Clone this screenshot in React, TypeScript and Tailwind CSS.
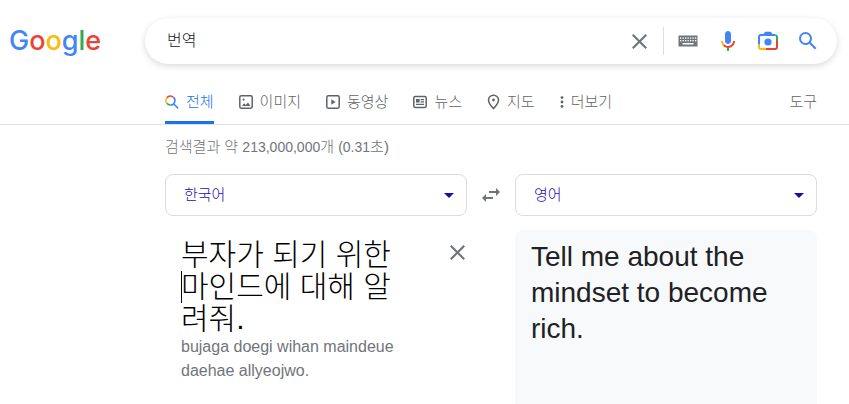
import { useState } from "react";
import type { ReactNode } from "react";

const iconBase = "block shrink-0";

function CloseIcon() {
  return (
    <svg className={iconBase} width="15" height="15" viewBox="5 5 14 14" fill="#70757a">
      <path d="M19 6.41L17.59 5 12 10.59 6.41 5 5 6.41 10.59 12 5 17.59 6.41 19 12 13.41 17.59 19 19 17.59 13.41 12z" />
    </svg>
  );
}

function KeyboardIcon() {
  const cols = [2, 4.5, 7, 9.5, 12, 14.5, 17];
  return (
    <svg className={iconBase} width="20" height="12" viewBox="0 0 20 12">
      <rect x="0.5" y="0.5" width="19" height="11" fill="#70757a" />
      {cols.map((x) => (
        <rect key={x} x={x} y="2.4" width="1.3" height="1.4" fill="#fff" />
      ))}
      {cols.map((x) => (
        <rect key={x} x={x} y="5" width="1.3" height="1.4" fill="#fff" />
      ))}
      <rect x="4.5" y="8" width="11" height="1.5" fill="#fff" />
    </svg>
  );
}

function MicIcon() {
  return (
    <svg className={iconBase} width="24" height="24" viewBox="0 0 24 24">
      <path fill="#4285f4" d="M12 15c1.66 0 3-1.31 3-2.97V5.01C15 3.35 13.66 2 12 2S9 3.34 9 5.01v7.02C9 13.69 10.34 15 12 15z" />
      <path fill="#34a853" d="M11 18.08h2V22h-2z" />
      <path fill="#fbbc04" d="M7.05 16.87C5.78 15.54 5 14.04 5 12h2c0 1.45.56 2.42 1.47 3.38v.32l-1.15 1.18z" />
      <path fill="#ea4335" d="M12 16.93a4.97 5.25 0 0 1-3.54-1.55l-1.41 1.49C8.31 18.21 10.07 19 12 19c3.87 0 6.99-2.92 6.99-7H17c0 2.92-2.24 4.93-5 4.93z" />
    </svg>
  );
}

function LensIcon() {
  return (
    <svg className={iconBase} width="24" height="24" viewBox="0 0 24 24" fill="none" strokeWidth="2">
      <path stroke="#fbbc04" d="M3 15.5V18a2 2 0 0 0 2 2h5" />
      <path stroke="#ea4335" d="M10 20h9a2 2 0 0 0 2-2v-6" />
      <path stroke="#34a853" d="M19.5 6.1A2 2 0 0 1 21 8v4" />
      <path stroke="#4285f4" d="M3 15.5V8a2 2 0 0 1 2-2h14.5" />
      <path fill="#4285f4" d="M7 6l2-3.2h6L17 6z" />
      <circle cx="12" cy="13" r="3.6" fill="#4285f4" />
    </svg>
  );
}

function SearchIcon() {
  return (
    <svg className={iconBase} width="24" height="24" viewBox="0 0 24 24" fill="#4285f4">
      <path d="M20.49 19l-5.73-5.73C15.53 12.2 16 10.91 16 9.5A6.5 6.5 0 1 0 9.5 16c1.41 0 2.7-.47 3.77-1.24L19 20.49 20.49 19zM5 9.5C5 7.01 7.01 5 9.5 5S14 7.01 14 9.5 11.99 14 9.5 14 5 11.99 5 9.5z" />
    </svg>
  );
}

function AllIcon() {
  return (
    <svg className={iconBase} width="14" height="14" viewBox="0 0 14 14" fill="none" strokeWidth="1.5">
      <path stroke="#ea4335" d="M1.9 2.7A4.5 4.5 0 0 1 8.6 2.4" />
      <path stroke="#fbbc04" d="M1.9 8.3A4.5 4.5 0 0 1 1.9 2.7" />
      <path stroke="#34a853" d="M5.3 10.1A4.5 4.5 0 0 1 1.9 8.3" />
      <path stroke="#4285f4" d="M8.6 2.4A4.5 4.5 0 0 1 5.3 10.1M8.6 8.8L13.2 13.4" />
    </svg>
  );
}

function ImageIcon() {
  return (
    <svg className={iconBase} width="14" height="14" viewBox="0 0 14 14" fill="none">
      <rect x="0.8" y="0.8" width="12.4" height="12.4" rx="1.4" stroke="#5f6368" strokeWidth="1.5" />
      <path fill="#5f6368" d="M3 11l2.2-2.8 1.6 1.9L9 7.6 11.4 11z" />
      <circle cx="4.6" cy="4.6" r="1.1" fill="#5f6368" />
    </svg>
  );
}

function VideoIcon() {
  return (
    <svg className={iconBase} width="14" height="14" viewBox="0 0 14 14" fill="none">
      <rect x="0.8" y="0.8" width="12.4" height="12.4" rx="1.4" stroke="#5f6368" strokeWidth="1.5" />
      <path fill="#5f6368" d="M5.3 4.2v5.6L9.6 7z" />
    </svg>
  );
}

function NewsIcon() {
  return (
    <svg className={iconBase} width="14" height="14" viewBox="0 0 14 14" fill="none">
      <rect x="0.8" y="1.6" width="12.4" height="10.8" rx="1.4" stroke="#5f6368" strokeWidth="1.5" />
      <path fill="#5f6368" d="M3 4h3.6v3.4H3zM7.6 4H11v1.2H7.6zM7.6 6.2H11v1.2H7.6zM3 8.8h8V10H3z" />
    </svg>
  );
}

function MapIcon() {
  return (
    <svg className={iconBase} width="13" height="16" viewBox="0 0 13 16" fill="none">
      <path stroke="#5f6368" strokeWidth="1.5" d="M6.5 1.2A4.9 4.9 0 0 0 1.5 6c0 3.4 5 8.6 5 8.6s5-5.2 5-8.6a4.9 4.9 0 0 0-5-4.8z" />
      <circle cx="6.5" cy="6" r="1.4" fill="#5f6368" />
    </svg>
  );
}

function MoreIcon() {
  return (
    <svg className={iconBase} width="4" height="14" viewBox="0 0 4 14" fill="#5f6368">
      <circle cx="2" cy="2.6" r="1.4" />
      <circle cx="2" cy="7" r="1.4" />
      <circle cx="2" cy="11.4" r="1.4" />
    </svg>
  );
}

function SwapIcon() {
  return (
    <svg className={iconBase} width="18" height="14" viewBox="0 0 18 14" fill="#70757a">
      <path d="M0 10l4-4v3h7v2H4v3zM18 4l-4-4v3H7v2h7v3z" />
    </svg>
  );
}

function Tab({ icon, label, active }: { icon: ReactNode; label: string; active?: boolean }) {
  return (
    <a
      href="#"
      className={
        active
          ? "flex items-center gap-[7px] border-b-3 border-[#1a73e8] pt-[3px] text-[#1a73e8]"
          : "flex items-center gap-[7px] border-b-3 border-transparent pt-[3px] text-[#5f6368]"
      }
    >
      {icon}
      {label}
    </a>
  );
}

function LanguageSelect({ label, options }: { label: string; options: string[] }) {
  return (
    <div className="relative flex-1">
      <select
        aria-label={label}
        className="h-[42px] w-full appearance-none rounded-lg border border-[#dadce0] bg-white px-[18px] text-[15px] font-light text-[#1a0dab] outline-none"
      >
        {options.map((o) => (
          <option key={o}>{o}</option>
        ))}
      </select>
      <svg className="pointer-events-none absolute top-[19px] right-[13px]" width="10" height="5" viewBox="0 0 10 5">
        <path fill="#1a0dab" d="M0 0h10L5 5z" />
      </svg>
    </div>
  );
}

export default function App() {
  const [query, setQuery] = useState("번역");
  const [source, setSource] = useState("부자가 되기 위한 마인드에 대해 알려줘.");

  return (
    <div className="flex min-h-screen flex-col bg-white font-['Liberation_Sans','Noto_Sans_CJK_KR',sans-serif] text-[15px] font-light">
      <header className="flex items-center pt-[18px] pr-3 pl-[9px]">
        <a
          href="#"
          aria-label="Google"
          className="w-[136px] shrink-0 font-['Inter',sans-serif] text-[27px] leading-[46px] font-medium"
        >
          <span className="text-[#4285f4]">G</span>
          <span className="text-[#ea4335]">o</span>
          <span className="text-[#fbbc05]">o</span>
          <span className="text-[#4285f4]">g</span>
          <span className="text-[#34a853]">l</span>
          <span className="text-[#ea4335]">e</span>
        </a>
        <form
          className="flex h-[46px] min-w-0 flex-1 items-center rounded-full bg-white pr-[9px] pl-[22px] shadow-[0_2px_6px_rgba(60,64,67,0.2)]"
          onSubmit={(e) => e.preventDefault()}
        >
          <input
            aria-label="검색"
            className="min-w-0 flex-1 text-base text-[#202124] outline-none"
            value={query}
            onChange={(e) => setQuery(e.target.value)}
          />
          <button type="button" aria-label="지우기" className="flex w-12 justify-center" onClick={() => setQuery("")}>
            <CloseIcon />
          </button>
          <span className="mr-1 h-7 w-px bg-[#dadce0]" />
          <button type="button" aria-label="입력 도구" className="flex w-10 justify-center">
            <KeyboardIcon />
          </button>
          <button type="button" aria-label="음성 검색" className="flex w-10 justify-center">
            <MicIcon />
          </button>
          <button type="button" aria-label="이미지로 검색" className="flex w-10 justify-center">
            <LensIcon />
          </button>
          <button type="submit" aria-label="Google 검색" className="flex w-10 justify-center">
            <SearchIcon />
          </button>
        </form>
      </header>

      <nav className="mt-4 flex h-[45px] gap-[25px] border-b border-[#dfe1e5] pr-8 pl-[165px]">
        <Tab active icon={<AllIcon />} label="전체" />
        <Tab icon={<ImageIcon />} label="이미지" />
        <Tab icon={<VideoIcon />} label="동영상" />
        <Tab icon={<NewsIcon />} label="뉴스" />
        <Tab icon={<MapIcon />} label="지도" />
        <Tab icon={<MoreIcon />} label="더보기" />
        <button type="button" className="ml-auto text-[#5f6368]">
          도구
        </button>
      </nav>

      <main className="flex flex-1 flex-col pr-8 pl-[165px]">
        <p className="mt-3 leading-5 text-[#70757a]">
          검색결과 약 <span className="text-sm">213,000,000</span>개 <span className="text-sm">(0.31</span>초)
        </p>

        <div className="mt-[17px] flex items-center">
          <LanguageSelect label="출발어" options={["한국어", "영어"]} />
          <button type="button" aria-label="언어 바꾸기" className="flex w-12 justify-center">
            <SwapIcon />
          </button>
          <LanguageSelect label="도착어" options={["영어", "한국어"]} />
        </div>

        <div className="mt-[14px] grid flex-1 grid-cols-2 gap-12">
          <section className="flex items-start justify-between pt-[9px] pr-0.5 pl-4">
            <div className="relative w-[220px]">
              <textarea
                aria-label="번역할 텍스트"
                rows={3}
                className="block w-full resize-none overflow-hidden text-[30px] leading-8 text-black outline-none"
                value={source}
                onChange={(e) => setSource(e.target.value)}
              />
              <span className="absolute top-8 left-0 h-8 w-px bg-black" />
              <p className="text-base text-[#70757a]">bujaga doegi wihan maindeue daehae allyeojwo.</p>
            </div>
            <button type="button" aria-label="텍스트 지우기" className="mt-1.5" onClick={() => setSource("")}>
              <CloseIcon />
            </button>
          </section>
          <section className="rounded-t-lg bg-[#f8f9fa] px-4 pt-[9px]">
            <p className="text-[28px] leading-9 text-[#202124]">
              Tell me about the mindset to become rich.
            </p>
          </section>
        </div>
      </main>
    </div>
  );
}
